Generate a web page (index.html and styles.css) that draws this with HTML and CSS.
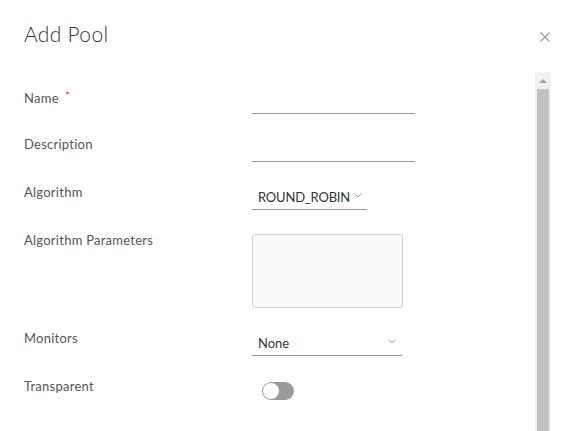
FILE: index.html
```html
<!DOCTYPE html>
<html>
<head>
<meta charset="utf-8">
<link rel="stylesheet" href="styles.css">
</head>
<body>
<div class="modal">
  <div class="header">
    <h1 class="title">Add Pool</h1>
    <button class="close" aria-label="Close">
      <svg width="10" height="10" viewBox="0 0 10 10"><path d="M0.5 0.5L9.5 9.5M9.5 0.5L0.5 9.5" stroke="#9a9a9a" stroke-width="1.1" fill="none"/></svg>
    </button>
  </div>
  <div class="body">
    <form class="form">
      <div class="row">
        <label class="label">Name <span class="req">*</span></label>
        <div class="field"><input class="text-input" type="text"></div>
      </div>
      <div class="row">
        <label class="label">Description</label>
        <div class="field"><input class="text-input" type="text"></div>
      </div>
      <div class="row">
        <label class="label">Algorithm</label>
        <div class="field">
          <div class="select select-algo">
            <span class="select-value">ROUND_ROBIN</span>
            <svg class="chev" width="8" height="5" viewBox="0 0 8 5"><path d="M0.5 0.5L4 4L7.5 0.5" stroke="#9a9a9a" stroke-width="1" fill="none"/></svg>
          </div>
        </div>
      </div>
      <div class="row row-tall">
        <label class="label">Algorithm Parameters</label>
        <div class="field"><textarea class="textarea"></textarea></div>
      </div>
      <div class="row">
        <label class="label">Monitors</label>
        <div class="field">
          <div class="select select-mon">
            <span class="select-value">None</span>
            <svg class="chev" width="8" height="5" viewBox="0 0 8 5"><path d="M0.5 0.5L4 4L7.5 0.5" stroke="#9a9a9a" stroke-width="1" fill="none"/></svg>
          </div>
        </div>
      </div>
      <div class="row">
        <label class="label">Transparent</label>
        <div class="field"><span class="toggle"><span class="knob"></span></span></div>
      </div>
    </form>
    <div class="scrollbar">
      <div class="sb-button"><span class="sb-arrow"></span></div>
      <div class="sb-track"><div class="sb-thumb"></div></div>
    </div>
  </div>
</div>
</body>
</html>
```
FILE: styles.css
```css
html, body {
  margin: 0;
  padding: 0;
  background: #fff;
  height: 100%;
  overflow: hidden;
}
body {
  font-family: Lato, "Open Sans", sans-serif;
  color: #565656;
}
.modal {
  height: 431px;
  display: flex;
  flex-direction: column;
}
.header {
  display: flex;
  justify-content: space-between;
  align-items: flex-start;
  padding: 22px 25px 0 24px;
  height: 48px;
  box-sizing: border-box;
}
.title {
  margin: 0;
  font-size: 21px;
  font-weight: 300;
  line-height: 24px;
  color: #333;
  letter-spacing: 0.3px;
}
.close {
  border: 0;
  background: none;
  padding: 0;
  margin: 10px 1px 0 0;
  width: 10px;
  height: 10px;
  display: block;
}
.close svg { display: block; }
.body {
  flex: 1;
  display: flex;
  padding: 0 25px 0 24px;
  margin-top: 24px;
  min-height: 0;
}
.form {
  flex: 1;
  padding-top: 12px;
}
.row {
  display: grid;
  grid-template-columns: 228px 1fr;
  height: 48px;
}
.row-tall { height: 98px; }
.label {
  font-size: 13px;
  line-height: 24px;
  color: #565656;
  letter-spacing: 0.25px;
}
.req {
  color: #e02b1f;
  font-size: 11px;
  vertical-align: 3px;
  margin-left: 3px;
}
.field { display: flex; align-items: flex-start; padding-top: 2px; }
.text-input {
  width: 163px;
  height: 28px;
  box-sizing: border-box;
  border: 0;
  border-bottom: 1px solid #9a9a9a;
  background: transparent;
  outline: none;
  padding: 0 6px;
  font: inherit;
}
.select {
  height: 28px;
  box-sizing: border-box;
  border-bottom: 1px solid #9a9a9a;
  display: flex;
  align-items: center;
  padding: 2px 0 0 6px;
  font-size: 13px;
  color: #333;
}
.select-algo { width: 115px; }
.select-algo .chev { margin-left: 4px; }
.select-algo .select-value { letter-spacing: -0.2px; }
.select-mon { width: 150px; justify-content: space-between; padding-right: 6px; }
.chev { display: block; margin-top: -2px; }
.textarea {
  margin-top: 4px;
  width: 151px;
  height: 74px;
  box-sizing: border-box;
  border: 1px solid #cfcfcf;
  border-radius: 3px;
  background: #fafafa;
  resize: none;
  outline: none;
}
.toggle {
  margin: 6px 0 0 10px;
  width: 32px;
  height: 18px;
  border-radius: 9px;
  background: #9a9a9a;
  display: flex;
  align-items: center;
  padding: 0 1px;
  box-sizing: border-box;
}
.knob {
  width: 16px;
  height: 16px;
  border-radius: 50%;
  background: #fff;
  box-sizing: border-box;
}
.scrollbar {
  width: 16px;
  display: flex;
  flex-direction: column;
  background: #f1f1f1;
}
.sb-button {
  height: 17px;
  display: flex;
  align-items: center;
  justify-content: center;
}
.sb-arrow {
  width: 0;
  height: 0;
  border-left: 4px solid transparent;
  border-right: 4px solid transparent;
  border-bottom: 4px solid #a3a3a3;
}
.sb-track {
  flex: 1;
  padding: 0 2px;
}
.sb-thumb {
  height: 100%;
  background: #c1c1c1;
}
```
